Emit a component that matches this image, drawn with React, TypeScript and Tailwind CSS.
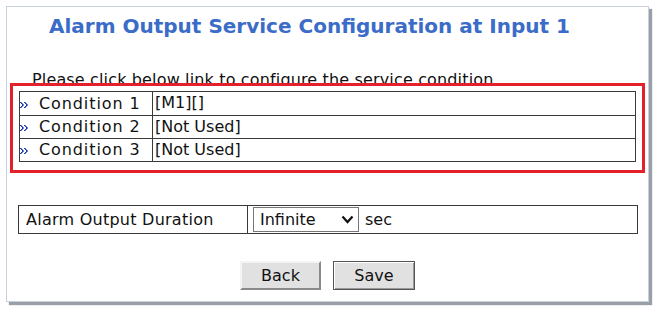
import React from "react";

const Arrow = () => (
  <svg width="8" height="6" viewBox="0 0 8 6" className="shrink-0 mt-[2px]">
    <g fill="#1a35a8">
      <rect x="0" y="0" width="1" height="1" />
      <rect x="1" y="1" width="1" height="1" />
      <rect x="2" y="2" width="1" height="2" />
      <rect x="1" y="4" width="1" height="1" />
      <rect x="0" y="5" width="1" height="1" />
      <rect x="4" y="0" width="1" height="1" />
      <rect x="5" y="1" width="1" height="1" />
      <rect x="6" y="2" width="1" height="2" />
      <rect x="5" y="4" width="1" height="1" />
      <rect x="4" y="5" width="1" height="1" />
    </g>
    <g fill="#6f86d6">
      <rect x="1" y="0" width="1" height="1" />
      <rect x="2" y="1" width="1" height="1" />
      <rect x="3" y="2" width="1" height="2" />
      <rect x="2" y="4" width="1" height="1" />
      <rect x="1" y="5" width="1" height="1" />
      <rect x="5" y="0" width="1" height="1" />
      <rect x="6" y="1" width="1" height="1" />
      <rect x="7" y="2" width="1" height="2" />
      <rect x="6" y="4" width="1" height="1" />
      <rect x="5" y="5" width="1" height="1" />
    </g>
  </svg>
);

const rows = [
  ["Condition 1", "[M1][]"],
  ["Condition 2", "[Not Used]"],
  ["Condition 3", "[Not Used]"],
];

export default function App() {
  return (
    <div
      className="w-[654px] h-[309px] bg-white overflow-hidden pt-[6px] pl-[6px]"
      style={{ fontFamily: '"DejaVu Sans", Verdana, sans-serif' }}
    >
      <div className="w-[643px] h-[296px] bg-white border border-[#c8d0dc] shadow-[3px_3px_1px_#9a9ea6] flex flex-col">
        <h1 className="pl-[42px] pt-[7px] text-[20px] leading-[24px] font-bold text-[#3a6cc8]">
          Alarm Output Service Configuration at Input 1
        </h1>
        <div className="pl-[25px] mt-[32px] text-[16px] leading-[20px] tracking-[0.15px] text-[#111]">
          Please click below link to configure the service condition.
        </div>
        <div className="ml-[3px] mt-[-7px] w-[635px] h-[90px] border-[3px] border-[#e3202b] bg-white pt-[5px] pl-[6px]">
          <div className="w-[617px] border border-[#3a3a3a] text-[16px] text-[#111]">
            {rows.map(([a, b], i) => (
              <div
                key={a}
                className={`flex h-[23px] ${i > 0 ? "border-t border-[#3a3a3a]" : ""}`}
              >
                <div className="w-[133px] border-r border-[#3a3a3a] flex items-center gap-[11px] leading-[22px]">
                  <Arrow />
                  <span className="tracking-[0.9px]">{a}</span>
                </div>
                <div className="pl-[2px] leading-[22px]">{b}</div>
              </div>
            ))}
          </div>
        </div>
        <div className="ml-[11px] mt-[32px] w-[620px] h-[29px] border border-[#3a3a3a] flex text-[16px] text-[#111]">
          <div className="w-[229px] border-r border-[#3a3a3a] pl-[7px] leading-[27px] tracking-[0.25px]">
            Alarm Output Duration
          </div>
          <div className="flex items-center pl-[5px] gap-[6px]">
            <div className="w-[106px] h-[25px] border border-[#767676] flex items-center justify-between pl-[6px] pr-[4px] bg-white">
              <span>Infinite</span>
              <svg width="13" height="9" viewBox="0 0 13 9">
                <path d="M1.5 1.5 L6.5 7 L11.5 1.5" stroke="#111" strokeWidth="2.2" fill="none" />
              </svg>
            </div>
            <span>sec</span>
          </div>
        </div>
        <div className="mt-[27px] flex gap-[12px] pl-[233px] text-[16px] text-[#111]">
          <button className="w-[81px] h-[29px] bg-[#e1e1e1] border-2 border-t-[#f4f4f4] border-l-[#f4f4f4] border-r-[#8a8a8a] border-b-[#8a8a8a]">
            Back
          </button>
          <button className="w-[82px] h-[29px] bg-[#e1e1e1] border border-[#555] shadow-[inset_1px_1px_0_#fff,inset_-1px_-1px_0_#999]">
            Save
          </button>
        </div>
      </div>
    </div>
  );
}
